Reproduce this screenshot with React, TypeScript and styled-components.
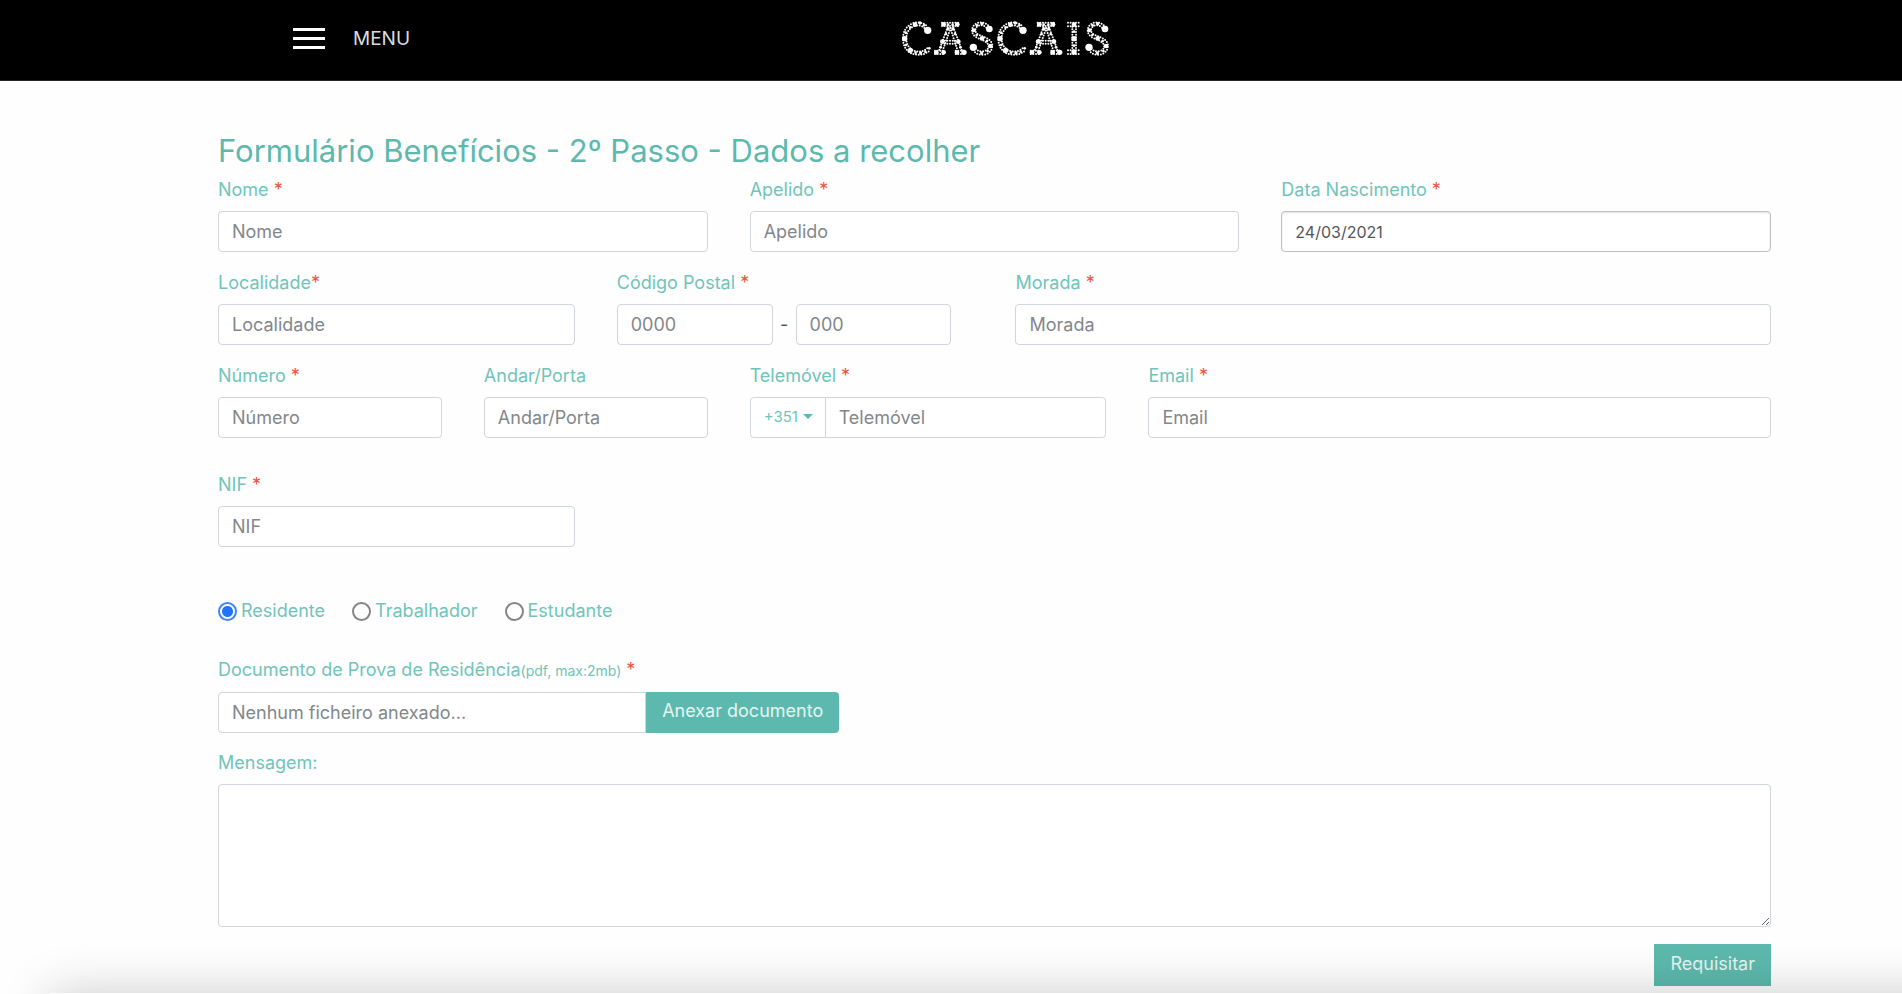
import React from "react";
import styled, { createGlobalStyle } from "styled-components";

const TEAL = "#5db9ad";
const TEAL_LIGHT = "#70c4b9";
const BORDER = "#d0d6db";

const GlobalStyle = createGlobalStyle`
  *, *::before, *::after { box-sizing: border-box; }
  body {
    margin: 0;
    background: #fefefe;
    color: #555;
    font-family: Inter, "Open Sans", sans-serif;
    font-size: 18px;
    line-height: 26px;
  }
  input, select, button, textarea { font: inherit; letter-spacing: inherit; }
`;

const Header = styled.header`
  display: grid;
  grid-template-columns: 1fr auto 1fr;
  align-items: center;
  height: 81px;
  padding: 0 82px 4px 293px;
  background: #000;
  border-bottom: 1px solid #2b2626;
`;

const MenuButton = styled.button`
  display: flex;
  align-items: center;
  justify-self: start;
  gap: 28px;
  padding: 0;
  border: 0;
  background: none;
  color: #dcdcdc;
  font-size: 19px;
  cursor: pointer;
`;

const MenuText = styled.span`
  padding-top: 2px;
`;

const Bars = styled.span`
  display: flex;
  flex-direction: column;
  gap: 6px;
  width: 32px;

  span {
    height: 3px;
    background: #fff;
  }
`;

const LogoLink = styled.a`
  display: block;
  height: 37px;
  margin-right: 104px;
`;

const Form = styled.form`
  padding: 52px 131px 8px 218px;
`;

const Title = styled.h1`
  margin: 0 0 8px;
  color: ${TEAL};
  font-size: 31px;
  font-weight: 400;
  line-height: 36px;
`;

const Grid = styled.div`
  display: grid;
  grid-template-columns: repeat(12, minmax(0, 1fr));
  gap: 18px 42px;
`;

const Field = styled.div<{ $span: number; $spaced?: boolean }>`
  display: flex;
  flex-direction: column;
  gap: 8px;
  grid-column: span ${(p) => p.$span};
  margin-top: ${(p) => (p.$spaced ? 16 : 0)}px;
`;

const Label = styled.label`
  color: ${TEAL_LIGHT};
  white-space: nowrap;
`;

const Small = styled.small`
  font-size: 14px;
`;

const Star = styled.span`
  color: #f0523f;
`;

const Input = styled.input<{ $joined?: "left" | "right" }>`
  width: 100%;
  min-width: 0;
  height: 41px;
  padding: 0 13px;
  border: 1px solid ${BORDER};
  border-radius: 4px;
  border-top-left-radius: ${(p) => (p.$joined === "left" ? 0 : 4)}px;
  border-bottom-left-radius: ${(p) => (p.$joined === "left" ? 0 : 4)}px;
  border-top-right-radius: ${(p) => (p.$joined === "right" ? 0 : 4)}px;
  border-bottom-right-radius: ${(p) => (p.$joined === "right" ? 0 : 4)}px;
  background: #fff;
  color: #555;
  outline: none;

  &::placeholder {
    color: #82878b;
    opacity: 1;
  }
`;

const DateInput = styled(Input)`
  border-color: #bfbfbf;
  font-size: 16px;
  box-shadow: inset 0 1px 2px rgba(0, 0, 0, 0.12);
`;

const PostalGroup = styled.div`
  display: grid;
  grid-template-columns: 1fr 23px 1fr;
  align-items: center;
  margin-right: 22px;
  text-align: center;
`;

const InputGroup = styled.div`
  display: flex;
`;

const PrefixBox = styled.div`
  position: relative;
  flex: none;
  width: 76px;
  margin-right: -1px;

  &::after {
    content: "";
    position: absolute;
    top: 17px;
    right: 13px;
    border: 5px solid transparent;
    border-top-color: ${TEAL};
    border-bottom: 0;
    pointer-events: none;
  }
`;

const PrefixSelect = styled.select`
  appearance: none;
  width: 100%;
  height: 41px;
  padding: 0 0 2px 13px;
  border: 1px solid ${BORDER};
  border-radius: 4px 0 0 4px;
  background: #fff;
  color: ${TEAL_LIGHT};
  font-size: 15px;
`;

const Radios = styled.div`
  display: flex;
  gap: 27px;
  margin: 51px 0 33px;
`;

const RadioLabel = styled.label`
  display: flex;
  align-items: center;
  gap: 4px;
  color: ${TEAL_LIGHT};
`;

const Radio = styled.input`
  appearance: none;
  width: 19px;
  height: 19px;
  margin: 0;
  border: 2px solid #858585;
  border-radius: 50%;
  background: #fff;

  &:checked {
    border-color: #3f85fb;
    background: radial-gradient(circle, #1f74fb 5px, #fff 6px);
  }
`;

const FileField = styled(Field)`
  width: 40%;
  margin-bottom: 17px;
`;

const TealButton = styled.button<{ $joined?: boolean }>`
  flex: none;
  height: ${(p) => (p.$joined ? 41 : 42)}px;
  padding: 0 16px 3px;
  border: 0;
  border-radius: ${(p) => (p.$joined ? "0 4px 4px 0" : "0")};
  background: ${TEAL};
  color: #e4f5f2;
  cursor: pointer;
`;

const TextArea = styled.textarea`
  display: block;
  width: 100%;
  height: 143px;
  padding: 8px 13px;
  border: 1px solid ${BORDER};
  border-radius: 4px;
  background: #fff;
  resize: vertical;
  outline: none;
`;

const Actions = styled.div`
  display: flex;
  justify-content: flex-end;
  margin-top: 17px;
`;

const BottomShade = styled.div`
  position: fixed;
  right: -60px;
  bottom: -100px;
  left: 50px;
  height: 101px;
  background: #fff;
  box-shadow: 0 0 50px rgba(0, 0, 0, 0.2);
  pointer-events: none;
`;

type Dot = [number, number, number];

const cDots: Dot[] = [
  [143, 91, 11], [105, 74, 7], [91, 82, 4], [120, 69, 5], [132, 76, 4],
  [77, 98, 4], [74, 116, 8], [78, 135, 4], [91, 151, 8], [107, 158, 4],
  [122, 159, 5], [136, 155, 4], [148, 145, 4],
];
const sDots: Dot[] = [
  [328, 87, 10], [281, 91, 6], [291, 76, 4], [306, 71, 5], [290, 105, 4],
  [306, 115, 7], [321, 123, 4], [331, 138, 7], [323, 153, 4], [305, 159, 5],
  [280, 142, 11],
];
const aDots: Dot[] = [
  [191, 73, 7], [232, 73, 7], [204, 74, 4], [218, 74, 4], [204, 87, 5],
  [219, 87, 5], [198, 102, 4], [225, 102, 4], [187, 125, 7], [235, 125, 7],
  [182, 142, 4], [241, 142, 4],
  [169, 157, 7], [191, 157, 7], [231, 157, 7], [252, 157, 8],
];
const iDots: Dot[] = [
  [582, 74, 7], [582, 95, 4], [582, 116, 8], [582, 137, 4], [582, 156, 8],
];

const C_PATHS = [
  "M138 76C126 66 108 64 92 73C76 82 69 98 69 116C69 134 76 150 92 159C110 168 136 166 152 149",
  "M133 84C122 74 109 74 97 81C84 89 79 102 79 116C79 130 84 142 97 150C110 158 130 157 145 142",
];
const S_PATHS = [
  "M324 76C314 65 294 64 283 75C272 87 275 102 286 110C300 119 318 121 325 135C329 146 317 155 305 154C296 154 291 150 287 146",
  "M319 83C310 73 296 74 289 82C283 91 287 100 298 105C312 111 331 116 336 131C340 146 330 161 312 164C300 166 290 162 283 155",
];
const A_PATHS = [
  "M186 68H238", "M186 78H238", "M203 82L177 152", "M212 84L188 152",
  "M211 84L233 152", "M220 82L246 152", "M194 122H229", "M194 131H229",
  "M165 152H196M165 162H196M227 152H258M227 162H258",
];
const I_PATHS = [
  "M564 68H602", "M564 79H602", "M577 80V152", "M588 80V152", "M564 151H602M564 162H602",
];

function Glyph({ paths, dots, x = 0 }: { paths: string[]; dots: Dot[]; x?: number }) {
  return (
    <g transform={`translate(${x} 0)`}>
      {paths.map((d) => (
        <path key={d} d={d} fill="none" stroke="#fff" strokeWidth="6" strokeLinecap="round" strokeDasharray="0 8" />
      ))}
      {dots.map(([cx, cy, r]) => (
        <circle key={`${cx}-${cy}`} cx={cx} cy={cy} r={r} fill="#fff" />
      ))}
    </g>
  );
}

function Logo() {
  return (
    <svg width="210" height="37" viewBox="60 60 630 111" role="img" aria-label="Cascais">
      <Glyph paths={C_PATHS} dots={cDots} />
      <Glyph paths={A_PATHS} dots={aDots} />
      <Glyph paths={S_PATHS} dots={sDots} />
      <Glyph paths={C_PATHS} dots={cDots} x={286} />
      <Glyph paths={A_PATHS} dots={aDots} x={287} />
      <Glyph paths={I_PATHS} dots={iDots} />
      <Glyph paths={S_PATHS} dots={sDots} x={347} />
    </svg>
  );
}

interface TextFieldProps {
  id: string;
  label: string;
  span: number;
  required?: boolean;
  tight?: boolean;
  spaced?: boolean;
}

function TextField({ id, label, span, required = true, tight, spaced }: TextFieldProps) {
  return (
    <Field $span={span} $spaced={spaced}>
      <Label htmlFor={id}>
        {label}
        {required && <Star>{tight ? "*" : " *"}</Star>}
      </Label>
      <Input id={id} placeholder={label} />
    </Field>
  );
}

const profiles = ["Residente", "Trabalhador", "Estudante"];

export default function App() {
  return (
    <>
      <GlobalStyle />
      <Header>
        <MenuButton type="button">
          <Bars>
            <span />
            <span />
            <span />
          </Bars>
          <MenuText>MENU</MenuText>
        </MenuButton>
        <LogoLink href="#">
          <Logo />
        </LogoLink>
      </Header>
      <Form onSubmit={(e) => e.preventDefault()}>
        <Title>Formulário Benefícios - 2º Passo - Dados a recolher</Title>
        <Grid>
          <TextField id="nome" label="Nome" span={4} />
          <TextField id="apelido" label="Apelido" span={4} />
          <Field $span={4}>
            <Label htmlFor="nascimento">
              Data Nascimento<Star> *</Star>
            </Label>
            <DateInput id="nascimento" defaultValue="24/03/2021" />
          </Field>

          <TextField id="localidade" label="Localidade" span={3} tight />
          <Field $span={3}>
            <Label htmlFor="postal">
              Código Postal<Star> *</Star>
            </Label>
            <PostalGroup>
              <Input id="postal" placeholder="0000" />
              -
              <Input aria-label="Código Postal, extensão" placeholder="000" />
            </PostalGroup>
          </Field>
          <TextField id="morada" label="Morada" span={6} />

          <TextField id="numero" label="Número" span={2} />
          <TextField id="andar" label="Andar/Porta" span={2} required={false} />
          <Field $span={3}>
            <Label htmlFor="telemovel">
              Telemóvel<Star> *</Star>
            </Label>
            <InputGroup>
              <PrefixBox>
                <PrefixSelect aria-label="Indicativo" defaultValue="+351">
                  <option>+351</option>
                </PrefixSelect>
              </PrefixBox>
              <Input id="telemovel" placeholder="Telemóvel" $joined="left" />
            </InputGroup>
          </Field>
          <TextField id="email" label="Email" span={5} />

          <TextField id="nif" label="NIF" span={3} spaced />
        </Grid>

        <Radios role="radiogroup" aria-label="Perfil">
          {profiles.map((name, i) => (
            <RadioLabel key={name}>
              <Radio type="radio" name="perfil" defaultChecked={i === 0} />
              {name}
            </RadioLabel>
          ))}
        </Radios>

        <FileField $span={12}>
          <Label htmlFor="documento">
            Documento de Prova de Residência<Small>(pdf, max:2mb)</Small>
            <Star> *</Star>
          </Label>
          <InputGroup>
            <Input id="documento" placeholder="Nenhum ficheiro anexado..." readOnly $joined="right" />
            <TealButton type="button" $joined>
              Anexar documento
            </TealButton>
          </InputGroup>
        </FileField>

        <Field $span={12}>
          <Label htmlFor="mensagem">Mensagem:</Label>
          <TextArea id="mensagem" />
        </Field>

        <Actions>
          <TealButton type="submit">Requisitar</TealButton>
        </Actions>
      </Form>
      <BottomShade />
    </>
  );
}
